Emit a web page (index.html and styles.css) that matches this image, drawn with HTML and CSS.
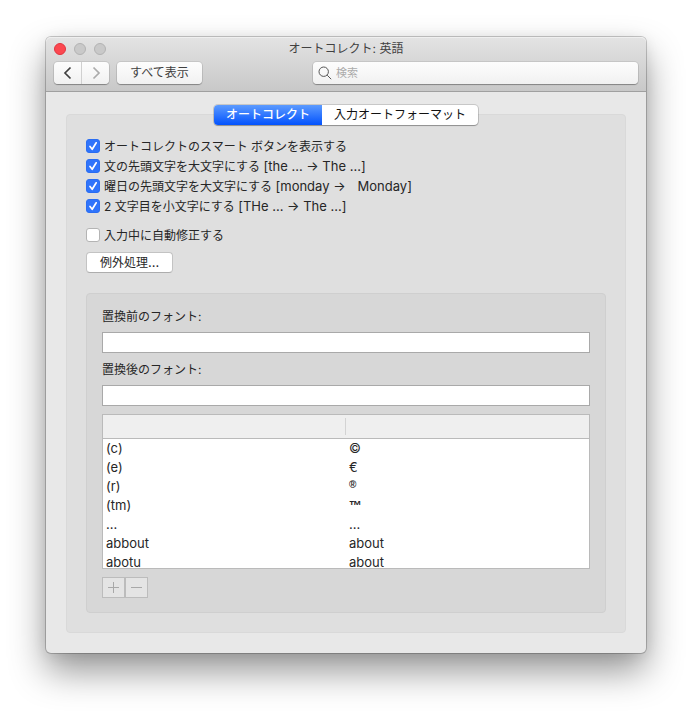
FILE: index.html
```html
<!DOCTYPE html>
<html lang="ja">
<head>
<meta charset="utf-8">
<meta name="viewport" content="width=device-width, initial-scale=1">
<title>オートコレクト: 英語</title>
<link rel="stylesheet" href="styles.css">
</head>
<body>
<main class="window">
  <header class="titlebar">
    <div class="title-row">
      <div class="lights">
        <button class="light light-close" type="button" aria-label="閉じる"></button>
        <button class="light" type="button" aria-label="しまう" disabled></button>
        <button class="light" type="button" aria-label="拡大" disabled></button>
      </div>
      <h1 class="title">オートコレクト: 英語</h1>
    </div>
    <div class="toolbar">
      <div class="nav">
        <button class="nav-button" type="button" aria-label="戻る">
          <svg width="10" height="14" viewBox="0 0 10 14"><path d="M7.500 1.500 2 7l5.500 5.500"/></svg>
        </button>
        <button class="nav-button" type="button" aria-label="進む" disabled>
          <svg width="10" height="14" viewBox="0 0 10 14"><path d="M2.500 1.500 8 7l-5.500 5.500"/></svg>
        </button>
      </div>
      <button class="tool-button" type="button">すべて表示</button>
      <div class="search">
        <svg class="search-icon" width="14" height="14" viewBox="0 0 14 14"><circle cx="5.700" cy="5.700" r="4.700"/><path d="m9.200 9.200 4 4"/></svg>
        <input class="search-input" type="search" placeholder="検索" aria-label="検索">
      </div>
    </div>
  </header>

  <div class="content">
    <div class="tabs" role="tablist">
      <button class="tab tab-active" type="button" role="tab" aria-selected="true">オートコレクト</button>
      <button class="tab" type="button" role="tab" aria-selected="false">入力オートフォーマット</button>
    </div>

    <section class="panel">
      <label class="option">
        <span class="box"><input class="checkbox" type="checkbox" checked><svg class="tick" width="14" height="14" viewBox="0 0 14 14"><path d="m4 7.500 2.200 2.800 4-6.500"/></svg></span>
        <span class="option-text">オートコレクトのスマート ボタンを表示する</span>
      </label>
      <label class="option">
        <span class="box"><input class="checkbox" type="checkbox" checked><svg class="tick" width="14" height="14" viewBox="0 0 14 14"><path d="m4 7.500 2.200 2.800 4-6.500"/></svg></span>
        <span class="option-text">文の先頭文字を大文字にする <span class="latin">[the ... → The ...]</span></span>
      </label>
      <label class="option">
        <span class="box"><input class="checkbox" type="checkbox" checked><svg class="tick" width="14" height="14" viewBox="0 0 14 14"><path d="m4 7.500 2.200 2.800 4-6.500"/></svg></span>
        <span class="option-text">曜日の先頭文字を大文字にする <span class="latin">[monday →</span>　<span class="latin">Monday]</span></span>
      </label>
      <label class="option">
        <span class="box"><input class="checkbox" type="checkbox" checked><svg class="tick" width="14" height="14" viewBox="0 0 14 14"><path d="m4 7.500 2.200 2.800 4-6.500"/></svg></span>
        <span class="option-text">2 文字目を小文字にする <span class="latin">[THe ... → The ...]</span></span>
      </label>
      <label class="option option-apart">
        <span class="box"><input class="checkbox" type="checkbox"><svg class="tick" width="14" height="14" viewBox="0 0 14 14"><path d="m4 7.500 2.200 2.800 4-6.500"/></svg></span>
        <span class="option-text">入力中に自動修正する</span>
      </label>
      <button class="push-button" type="button">例外処理<span class="latin">...</span></button>

      <div class="group">
        <label class="field-label" for="before">置換前のフォント:</label>
        <input class="field" id="before" type="text">
        <label class="field-label" for="after">置換後のフォント:</label>
        <input class="field" id="after" type="text">

        <div class="list">
          <table class="entries">
            <thead><tr><th aria-label="置換前"></th><th aria-label="置換後"></th></tr></thead>
            <tbody>
              <tr><td>(c)</td><td>©</td></tr>
              <tr><td>(e)</td><td>€</td></tr>
              <tr><td>(r)</td><td><span class="registered">®</span></td></tr>
              <tr><td>(tm)</td><td><span class="trademark">™</span></td></tr>
              <tr><td>...</td><td>...</td></tr>
              <tr><td>abbout</td><td>about</td></tr>
              <tr><td>abotu</td><td>about</td></tr>
            </tbody>
          </table>
        </div>

        <div class="list-actions">
          <button class="square-button" type="button" aria-label="追加" disabled><svg width="11" height="11" viewBox="0 0 11 11"><path d="M0 5.500h11M5.500 0v11"/></svg></button>
          <button class="square-button" type="button" aria-label="削除" disabled><svg width="11" height="11" viewBox="0 0 11 11"><path d="M0 5.500h11"/></svg></button>
        </div>
      </div>
    </section>
  </div>
</main>
</body>
</html>
```

FILE: styles.css
```css
* {
  box-sizing: border-box;
}

body {
  margin: 0;
  padding: 37px 49px 70px 46px;
  background: #fff;
  color: #262626;
  font: 12px/20px Inter, "Noto Sans CJK JP", sans-serif;
}

button,
input {
  margin: 0;
  padding: 0;
  border: 0;
  border-radius: 0;
  color: inherit;
  font: inherit;
}

svg {
  display: block;
  fill: none;
  stroke: currentColor;
}

.window {
  border-radius: 5px;
  background: #e8e8e8;
  box-shadow: 0 0 0 1px rgba(0, 0, 0, 0.2), 0 18px 36px rgba(0, 0, 0, 0.42), 0 2px 14px rgba(0, 0, 0, 0.08);
}

.titlebar {
  padding: 0 8px 7px;
  border-bottom: 1px solid #a0a0a0;
  border-radius: 5px 5px 0 0;
  background: linear-gradient(#e3e3e3, #c8c8c8);
  box-shadow: inset 0 1px #efefef;
}

.title-row {
  display: grid;
  grid-template-columns: 1fr auto 1fr;
  align-items: center;
  height: 25px;
  padding-bottom: 2px;
}

.lights {
  display: flex;
  gap: 8px;
}

.light {
  width: 12px;
  height: 12px;
  border: 1px solid #b3b3b3;
  border-radius: 50%;
  background: #c9c9c9;
}

.light-close {
  border-color: #e2343f;
  background: #fc4850;
}

.title {
  margin: 0;
  color: #414141;
  font-size: 12px;
  font-weight: 400;
}

.toolbar {
  display: flex;
  gap: 8px;
}

.nav {
  display: flex;
  gap: 1px;
  border-radius: 4px;
  background: #d0d0d0;
  box-shadow: 0 0 0 1px rgba(0, 0, 0, 0.08), 0 1px 1px rgba(0, 0, 0, 0.3);
}

.nav-button,
.tool-button,
.search {
  height: 22px;
  background: linear-gradient(#fdfdfd, #f1f1f1);
}

.nav-button {
  display: grid;
  place-items: center;
  width: 27px;
  color: #404040;
  stroke-width: 1.700;
}

.nav-button:first-child {
  border-radius: 4px 0 0 4px;
}

.nav-button:last-child {
  border-radius: 0 4px 4px 0;
}

.nav-button:disabled {
  color: #ababab;
}

.tool-button,
.search {
  border-radius: 4px;
  box-shadow: 0 0 0 1px rgba(0, 0, 0, 0.08), 0 1px 1px rgba(0, 0, 0, 0.3);
}

.tool-button {
  padding: 0 13px;
  color: #404040;
}

.search {
  display: flex;
  flex: 0 1 325px;
  align-items: center;
  gap: 4px;
  margin-left: auto;
  padding: 0 5px;
}

.search-icon {
  flex: none;
  color: #555;
}

.search-input {
  flex: 1;
  min-width: 0;
  outline: 0;
  background: none;
  font-size: 11px;
  appearance: none;
}

.search-input::placeholder {
  color: #ababab;
}

.content {
  display: flex;
  flex-direction: column;
  padding: 13px 20px 20px;
}

.tabs {
  z-index: 1;
  display: flex;
  align-self: center;
  margin-bottom: -11px;
  border-radius: 4px;
  background: #fff;
  box-shadow: 0 0 0 1px rgba(0, 0, 0, 0.14), 0 1px 1px rgba(0, 0, 0, 0.25);
}

.tab {
  height: 20px;
  padding: 0 12px;
  background: none;
  color: #111;
}

.tab-active {
  border-radius: 4px 0 0 4px;
  background: linear-gradient(#5c9bff, #0252fd);
  color: #fff;
  font-weight: 500;
}

.panel {
  display: flex;
  flex-direction: column;
  padding: 21px 19px 19px;
  border: 1px solid #d9d9d9;
  border-radius: 4px;
  background: #dfdfdf;
}

.option {
  display: flex;
  align-items: center;
  align-self: flex-start;
  gap: 4px;
  height: 20px;
}

.option-apart {
  margin-top: 9px;
}

.option-text {
  padding-top: 2px;
}

.latin {
  font-size: 13px;
  line-height: 12px;
}

.box {
  display: grid;
}

.checkbox,
.tick {
  grid-area: 1 / 1;
}

.checkbox {
  width: 14px;
  height: 14px;
  border: 1px solid #b4b4b4;
  border-radius: 3px;
  background: #fff;
  appearance: none;
}

.checkbox:checked {
  border-color: #2a6df2;
  background: #2f74fb;
}

.tick {
  visibility: hidden;
  color: #fff;
  pointer-events: none;
  stroke-width: 1.700;
  stroke-linecap: round;
  stroke-linejoin: round;
}

.checkbox:checked + .tick {
  visibility: visible;
}

.push-button {
  align-self: flex-start;
  height: 21px;
  margin: 7px 0 20px;
  padding: 0 13px;
  border: 1px solid #c3c3c3;
  border-bottom-color: #adadad;
  border-radius: 4px;
  background: #fff;
  line-height: 19px;
}

.group {
  display: flex;
  flex-direction: column;
  padding: 13px 15px 14px;
  border: 1px solid #cfcfcf;
  border-radius: 4px;
  background: #d7d7d7;
}

.field-label {
  height: 25px;
}

.field {
  height: 21px;
  margin-bottom: 7px;
  padding: 0 3px;
  border: 1px solid #a9a9a9;
  background: #fff;
}

.list {
  height: 155px;
  margin: 1px 0 8px;
  border: 1px solid #bababa;
  background: #fff;
  overflow-y: auto;
  scrollbar-width: none;
}

.entries {
  width: 100%;
  border-spacing: 0;
  table-layout: fixed;
}

.entries th {
  height: 24px;
  padding: 0;
  border-bottom: 1px solid #bababa;
  background: #efefef;
}

.entries th:first-child {
  background: linear-gradient(#d3d3d3, #d3d3d3) right center / 1px 17px no-repeat #efefef;
}

.entries td {
  height: 19px;
  padding: 0 3px;
  font-size: 13px;
  line-height: 19px;
}

.registered,
.trademark {
  display: block;
  height: 19px;
}

.registered {
  font-family: "Liberation Sans", sans-serif;
  font-size: 10px;
  font-weight: 700;
  line-height: 16px;
}

.trademark {
  font-family: "Liberation Sans", sans-serif;
  font-weight: 700;
}

.list-actions {
  display: flex;
}

.square-button {
  display: grid;
  place-items: center;
  width: 23px;
  height: 21px;
  border: 1px solid #bcbcbc;
  background: #e4e4e4;
  color: #a8a8a8;
}
```
